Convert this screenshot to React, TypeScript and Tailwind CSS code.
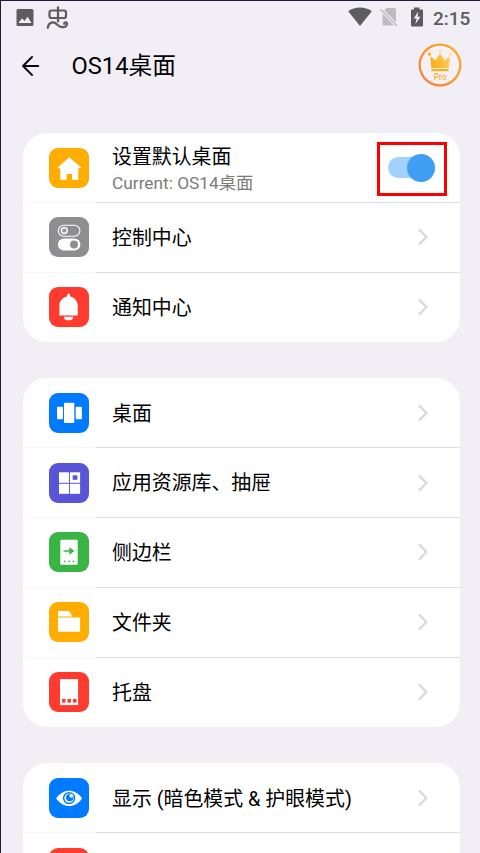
import type { ReactNode } from 'react';

interface Item {
  title: string;
  color: string;
  icon: ReactNode;
  subtitle?: string;
  toggle?: boolean;
}

const HomeIcon = (
  <path d="M20.3 9.2 L33 20.2 H29.3 V31.7 H23 V26 H17.7 V31.7 H11.3 V20.2 H7.9 Z" />
);

const ControlIcon = (
  <>
    <rect x="9.3" y="8.2" width="21.6" height="11" rx="5.5" fill="none" stroke="#fff" strokeWidth="1.1" />
    <circle cx="15.3" cy="13.6" r="2.9" fill="none" stroke="#fff" strokeWidth="1.5" />
    <circle cx="15.3" cy="13.6" r="0.7" fill="#b9b9bb" />
    <rect x="8.9" y="21.5" width="22.5" height="12" rx="6" />
    <circle cx="25" cy="27.6" r="4" fill="#8e8e93" />
  </>
);

const BellIcon = (
  <>
    <path d="M18 9.6 C18.2 5.4 21 5.4 21.2 9.6 C25.8 10.8 28.8 14.4 28.8 19 V28.6 H10.4 V19 C10.4 14.4 13.2 10.8 18 9.6 Z" />
    <path d="M14.8 29.8 H24.2 C24 32 22.6 33.2 21 33.2 H18 C16.4 33.2 15 32 14.8 29.8 Z" />
  </>
);

const DesktopIcon = (
  <>
    <rect x="8" y="13.7" width="6" height="12.6" rx="0.8" />
    <rect x="15" y="9.7" width="10.3" height="20.3" rx="0.8" />
    <rect x="26.7" y="13.7" width="6.2" height="12.6" rx="0.8" />
  </>
);

const LibraryIcon = (
  <>
    <rect x="10" y="9.3" width="10.1" height="10.5" />
    <rect x="21" y="9.3" width="10.1" height="10.5" />
    <rect x="10" y="20.8" width="10.1" height="10" />
    <rect x="21" y="20.8" width="10.1" height="10" />
    <rect x="23.7" y="12.3" width="4.7" height="4.5" fill="#5856d6" />
  </>
);

const SidebarIcon = (
  <>
    <rect x="11.3" y="7.7" width="17.4" height="25" rx="1.2" />
    <g fill="#38b543">
      <path d="M14.5 18.3 H20.3 V15.3 L25.5 19 L20.3 22.7 V19.7 H14.5 Z" />
      <circle cx="15.7" cy="29.4" r="0.9" />
      <circle cx="20" cy="29.4" r="0.9" />
      <circle cx="24.4" cy="29.4" r="0.9" />
    </g>
  </>
);

const FolderIcon = (
  <>
    <path d="M9 14.4 V9.7 Q9 9 9.7 9 H19.4 Q20.2 9 20.6 9.7 L23.2 14.4 Z" />
    <rect x="9" y="15.6" width="22.1" height="14.2" rx="0.6" />
  </>
);

const DockIcon = (
  <>
    <rect x="11" y="7.1" width="18.1" height="26" />
    <g fill="#ff3b30">
      <rect x="13" y="27" width="3.6" height="3.6" />
      <rect x="18.4" y="27" width="3.6" height="3.6" />
      <rect x="23.9" y="27" width="3.6" height="3.6" />
    </g>
  </>
);

const EyeIcon = (
  <>
    <path d="M7.2 20.4 C14 10.2 26.3 10.2 33.1 20.4 C26.3 30.4 14 30.4 7.2 20.4 Z" />
    <circle cx="20.1" cy="20.1" r="6.2" fill="#007aff" />
    <circle cx="20.1" cy="20.1" r="4.7" />
    <circle cx="20.7" cy="19.6" r="3.7" fill="#007aff" />
    <circle cx="22.3" cy="17.8" r="1.9" />
  </>
);

const groups: Item[][] = [
  [
    { title: '设置默认桌面', subtitle: 'Current: OS14桌面', color: 'bg-[#ffad00]', icon: HomeIcon, toggle: true },
    { title: '控制中心', color: 'bg-[#8e8e91]', icon: ControlIcon },
    { title: '通知中心', color: 'bg-[#ff3b30]', icon: BellIcon },
  ],
  [
    { title: '桌面', color: 'bg-[#007aff]', icon: DesktopIcon },
    { title: '应用资源库、抽屉', color: 'bg-[#5856d6]', icon: LibraryIcon },
    { title: '侧边栏', color: 'bg-[#38b543]', icon: SidebarIcon },
    { title: '文件夹', color: 'bg-[#ffad00]', icon: FolderIcon },
    { title: '托盘', color: 'bg-[#ff3b30]', icon: DockIcon },
  ],
  [
    { title: '显示 (暗色模式 & 护眼模式)', color: 'bg-[#007aff]', icon: EyeIcon },
    { title: '', color: 'bg-[#ff3b30]', icon: BellIcon },
  ],
];

function StatusBar() {
  return (
    <div className="flex h-[32px] items-center pr-[10px] pl-[15px] text-[#5c5c5e]">
      <svg className="h-[17px] w-[18px]" viewBox="0 0 18 17">
        <rect x="0.5" y="0" width="17" height="17" rx="1.5" fill="currentColor" />
        <path d="M2.5 14 L6 9.2 L8.5 12 L11.6 7.8 L15.5 14 Z" fill="#f2eff7" />
      </svg>
      <svg
        className="mt-px ml-[12px] h-[24px] w-[24px]"
        viewBox="0 0 24 24"
        fill="none"
        stroke="currentColor"
        strokeWidth="2.2"
        strokeLinecap="round"
      >
        <rect x="3.5" y="4.5" width="16.5" height="7.5" rx="2" />
        <path d="M12 1.3 V15.5" />
        <path d="M1.8 21.8 C2.6 16 8 15 11 18.4 C13.5 21.8 20.5 22.3 21 17.8 C21 15.8 18 16 18.2 17.8" />
      </svg>
      <div className="flex-1" />
      <svg className="h-[20px] w-[24px]" viewBox="0 0 24 20" fill="currentColor">
        <path d="M0.2 4.2 C7 -0.8 17 -0.8 23.8 4.2 L12 19 Z" />
      </svg>
      <svg className="ml-[8px] h-[20px] w-[18px]" viewBox="0 0 18 20">
        <path d="M6.5 1 H14.5 Q16 1 16 2.5 V17.5 Q16 18.5 15 18.5 H4 Q2.5 18.5 2.5 17 V5 Z" fill="#bdbbc0" />
        <path d="M0.5 2 L17 19" stroke="#f2eff7" strokeWidth="3.6" />
        <path d="M0.5 2.2 L16.8 18.8" stroke="#bdbbc0" strokeWidth="1.5" />
      </svg>
      <svg className="ml-[12px] h-[20px] w-[14px]" viewBox="0 0 14 20">
        <path d="M4 0.5 H9.5 V2.5 H12 Q13 2.5 13 3.5 V18.5 Q13 19.5 12 19.5 H2 Q1 19.5 1 18.5 V3.5 Q1 2.5 2 2.5 H4 Z" fill="currentColor" />
        <path d="M8.2 4.5 L3.7 11.4 H6.6 L5.4 17 L10.5 9.7 H7.6 Z" fill="#f2eff7" />
      </svg>
      <span className="ml-[9px] w-[37px] pt-[2px] text-[19px] leading-none font-medium whitespace-nowrap">2:15</span>
    </div>
  );
}

function ProBadge() {
  return (
    <svg className="mb-[2px] h-[44px] w-[44px]" viewBox="0 0 44 44">
      <defs>
        <linearGradient id="ring" x1="0" y1="1" x2="1" y2="0">
          <stop offset="0" stopColor="#ff7a3c" />
          <stop offset="1" stopColor="#ffae1f" />
        </linearGradient>
        <linearGradient id="crown" x1="0" y1="0.3" x2="1" y2="0">
          <stop offset="0" stopColor="#fcae1c" />
          <stop offset="1" stopColor="#fdd36a" />
        </linearGradient>
      </defs>
      <circle cx="22" cy="22" r="20.3" fill="#f5f1f5" stroke="url(#ring)" strokeWidth="2.2" />
      <path d="M12.3 13.5 L17.6 17.3 L22 10.3 L26.5 17.3 L32 13.5 L30.8 25 H13.4 Z" fill="url(#crown)" />
      <rect x="13.4" y="26" width="17.3" height="2.2" rx="0.4" fill="#fcae1c" />
      <circle cx="11.5" cy="11.2" r="1.6" fill="#fcae1c" />
      <circle cx="22" cy="7.8" r="1.6" fill="#fde0a0" />
      <circle cx="32.5" cy="11.2" r="1.6" fill="#fde0a0" />
      <text x="22.2" y="37.3" textAnchor="middle" fontSize="8.4" fontWeight="500" fill="#f9b233">
        Pro
      </text>
    </svg>
  );
}

function Header() {
  return (
    <header className="flex h-[66px] items-center pr-[18px] pl-[20px]">
      <svg
        className="h-[20px] w-[20px]"
        viewBox="0 0 20 20"
        fill="none"
        stroke="#0b0b0d"
        strokeWidth="1.9"
        strokeLinecap="round"
        strokeLinejoin="round"
      >
        <path d="M11 1 L2 10 L11 19 M2 10 H17.3" />
      </svg>
      <h1 className="ml-[30.5px] flex-1 pt-[2px] text-[23.7px] leading-none text-black">OS14桌面</h1>
      <ProBadge />
    </header>
  );
}

function Toggle() {
  return (
    <div className="mt-[2px] mr-[13.5px] flex h-[54px] w-[69.5px] items-center border-[3px] border-[#fe0000] pb-[2px] pl-[8px]">
      <div className="flex h-[21px] w-[46.5px] items-center justify-end rounded-full bg-[#a2d2fb]">
        <div className="h-[28px] w-[28px] shrink-0 rounded-full bg-[#419ff3]" />
      </div>
    </div>
  );
}

function Chevron() {
  return (
    <svg className="mr-[31px] h-[18px] w-[12px]" viewBox="0 0 12 18">
      <path
        d="M2.6 2 L9.4 9 L2.6 16"
        fill="none"
        stroke="#d9d9db"
        strokeWidth="2.4"
        strokeLinecap="round"
        strokeLinejoin="round"
      />
    </svg>
  );
}

function Row({ item, last }: { item: Item; last: boolean }) {
  return (
    <div className={`flex flex-col ${last ? 'h-[69px]' : 'h-[69.7px]'}`}>
      <div className="flex flex-1 items-center pl-[26.5px]">
        <div className={`h-[40px] w-[40px] shrink-0 rounded-[9px] ${item.color}`}>
          <svg className="h-[40px] w-[40px]" viewBox="0 0 40 40" fill="#fff">
            {item.icon}
          </svg>
        </div>
        <div className="ml-[23px] flex-1 pt-[3px] whitespace-nowrap">
          <div className={`text-[19.9px] leading-[26px] text-black ${item.subtitle ? 'pt-[2px]' : ''}`}>{item.title}</div>
          {item.subtitle && <div className="text-[17.3px] leading-[24px] text-[#7b7b7b]">{item.subtitle}</div>}
        </div>
        {item.toggle ? <Toggle /> : <Chevron />}
      </div>
      {!last && (
        <div className="flex h-px">
          <div className="w-[73.5px] bg-[#f8f8f9]" />
          <div className="flex-1 bg-[#dedee0]" />
        </div>
      )}
    </div>
  );
}

export default function App() {
  return (
    <div className="h-[853px] w-[480px] overflow-hidden border-t border-l border-[#1f1a38] bg-[#f1eef6] font-[Roboto,'Noto_Sans_CJK_SC',sans-serif]">
      <StatusBar />
      <Header />
      <main className="mt-[33.5px] mr-[20px] ml-[21.5px] flex flex-col gap-[36.5px]">
        {groups.map((group, i) => (
          <section key={i} className="overflow-hidden rounded-[24px] bg-white pt-[0.7px]">
            {group.map((item, j) => (
              <Row key={j} item={item} last={j === group.length - 1} />
            ))}
          </section>
        ))}
      </main>
    </div>
  );
}
